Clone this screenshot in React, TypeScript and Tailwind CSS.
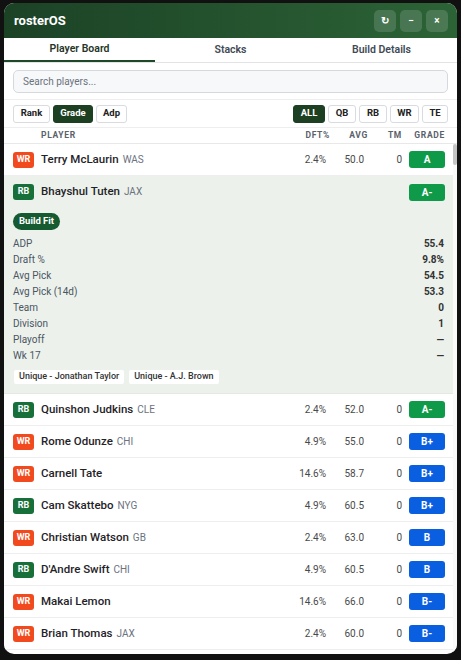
type Pos = 'WR' | 'RB';

interface Player {
  name: string;
  team?: string;
  pos: Pos;
  dft: string;
  avg: string;
  tm: string;
  grade: string;
  expanded?: boolean;
}

const players: Player[] = [
  { name: 'Terry McLaurin', team: 'WAS', pos: 'WR', dft: '2.4%', avg: '50.0', tm: '0', grade: 'A' },
  { name: 'Bhayshul Tuten', team: 'JAX', pos: 'RB', dft: '', avg: '', tm: '', grade: 'A-', expanded: true },
  { name: 'Quinshon Judkins', team: 'CLE', pos: 'RB', dft: '2.4%', avg: '52.0', tm: '0', grade: 'A-' },
  { name: 'Rome Odunze', team: 'CHI', pos: 'WR', dft: '4.9%', avg: '55.0', tm: '0', grade: 'B+' },
  { name: 'Carnell Tate', pos: 'WR', dft: '14.6%', avg: '58.7', tm: '0', grade: 'B+' },
  { name: 'Cam Skattebo', team: 'NYG', pos: 'RB', dft: '4.9%', avg: '60.5', tm: '0', grade: 'B+' },
  { name: 'Christian Watson', team: 'GB', pos: 'WR', dft: '2.4%', avg: '63.0', tm: '0', grade: 'B' },
  { name: "D'Andre Swift", team: 'CHI', pos: 'RB', dft: '4.9%', avg: '60.5', tm: '0', grade: 'B' },
  { name: 'Makai Lemon', pos: 'WR', dft: '14.6%', avg: '66.0', tm: '0', grade: 'B-' },
  { name: 'Brian Thomas', team: 'JAX', pos: 'WR', dft: '2.4%', avg: '60.0', tm: '0', grade: 'B-' },
];

const stats: [string, string][] = [
  ['ADP', '55.4'],
  ['Draft %', '9.8%'],
  ['Avg Pick', '54.5'],
  ['Avg Pick (14d)', '53.3'],
  ['Team', '0'],
  ['Division', '1'],
  ['Playoff', '—'],
  ['Wk 17', '—'],
];

function PosBadge({ pos }: { pos: Pos }) {
  return (
    <span
      className={`w-[21px] h-[16px] rounded-[3px] flex items-center justify-center text-[9px] font-bold text-white shrink-0 ${
        pos === 'WR' ? 'bg-[#f24a1f]' : 'bg-[#17703a]'
      }`}
    >
      {pos}
    </span>
  );
}

function GradeBadge({ grade }: { grade: string }) {
  const green = grade.startsWith('A');
  return (
    <span
      className={`w-[36px] h-[17px] rounded-[3px] flex items-center justify-center text-[10px] font-bold text-white ${
        green ? 'bg-[#0f9a4a]' : 'bg-[#0a5fe0]'
      }`}
    >
      {grade}
    </span>
  );
}

function NameCell({ p }: { p: Player }) {
  return (
    <div className="flex-1 flex items-center gap-[7px] min-w-0">
      <PosBadge pos={p.pos} />
      <span className="text-[11.5px] font-medium text-[#1f2328] whitespace-nowrap">
        {p.name}
        {p.team && <span className="ml-[4px] text-[10px] font-normal text-[#6b7280]">{p.team}</span>}
      </span>
    </div>
  );
}

function Row({ p }: { p: Player }) {
  return (
    <div className="h-[32px] flex items-center pl-[9px] pr-[8px] border-b border-[#eeeeee] bg-white">
      <NameCell p={p} />
      <div className="w-[50px] text-right text-[10px] text-[#4a4a4a]">{p.dft}</div>
      <div className="w-[38px] text-right text-[10px] text-[#4a4a4a]">{p.avg}</div>
      <div className="w-[38px] text-right text-[10px] text-[#4a4a4a]">{p.tm}</div>
      <div className="ml-[7px]">
        <GradeBadge grade={p.grade} />
      </div>
    </div>
  );
}

function ExpandedRow({ p }: { p: Player }) {
  return (
    <div className="bg-[#ecf1eb] border-b border-[#e3e8e2]">
      <div className="h-[32px] flex items-center pl-[9px] pr-[8px]">
        <NameCell p={p} />
        <div className="ml-[7px]">
          <GradeBadge grade={p.grade} />
        </div>
      </div>
      <div className="pl-[9px] pr-[9px] pt-[5px] pb-[9px]">
        <div className="flex">
          <span className="flex items-center h-[17px] px-[6px] rounded-full bg-[#155a31] text-white text-[9.5px] font-bold">
            Build Fit
          </span>
        </div>
        <div className="mt-[5px]">
          {stats.map(([k, v]) => (
            <div key={k} className="h-[16px] flex items-center justify-between text-[10px]">
              <span className="text-[#4b5563]">{k}</span>
              <span className="font-bold text-[#333]">{v}</span>
            </div>
          ))}
        </div>
        <div className="flex gap-[5px] mt-[7px] pl-[1px]">
          {['Unique - Jonathan Taylor', 'Unique - A.J. Brown'].map((t) => (
            <span key={t} className="h-[14px] px-[5px] flex items-center bg-white rounded-[2px] text-[9px] font-medium text-[#333]">
              {t}
            </span>
          ))}
        </div>
      </div>
    </div>
  );
}

function FilterBtn({ label, active, w }: { label: string; active?: boolean; w: string }) {
  return (
    <button
      className={`${w} h-[18px] rounded-[3px] border text-[9.5px] font-bold flex items-center justify-center ${
        active ? 'bg-[#1d3f22] border-[#1d3f22] text-white' : 'bg-white border-[#d8dbdf] text-[#222]'
      }`}
    >
      {label}
    </button>
  );
}

export default function App() {
  return (
    <div
      className="w-[461px] h-[660px] bg-[#111111] pt-[3px] pl-[4px] pr-[4px] pb-[6px]"
      style={{ fontFamily: 'Roboto, "Noto Sans", sans-serif' }}
    >
      <div className="h-full rounded-[10px] overflow-hidden bg-white flex flex-col">
        {/* title bar */}
        <div className="h-[35px] shrink-0 bg-gradient-to-r from-[#1c4226] to-[#2c6336] flex items-center pl-[10px] pr-[9px]">
          <span className="text-white font-bold text-[13px]">rosterOS</span>
          <div className="ml-auto flex gap-[4px]">
            {['↻', '−', '×'].map((g) => (
              <button
                key={g}
                className="w-[22px] h-[22px] rounded-[5px] bg-white/15 text-white text-[10px] font-bold flex items-center justify-center"
              >
                {g}
              </button>
            ))}
          </div>
        </div>

        {/* tabs */}
        <div className="h-[25px] shrink-0 flex border-b border-[#e2e4e6]">
          <div className="flex-1 flex items-center justify-center text-[10.5px] font-semibold text-[#253528] border-b-2 border-[#1f4a2a]">
            Player Board
          </div>
          <div className="flex-1 flex items-center justify-center text-[10.5px] font-semibold text-[#3f4a55]">
            Stacks
          </div>
          <div className="flex-1 flex items-center justify-center text-[10.5px] font-semibold text-[#3f4a55]">
            Build Details
          </div>
        </div>

        {/* search */}
        <div className="shrink-0 px-[9px] pt-[7px] pb-[6px] border-b border-[#eeeeee]">
          <div className="h-[23px] rounded-[5px] border border-[#d5d9de] bg-[#f7f8fa] flex items-center pl-[9px] text-[10px] text-[#6b7280]">
            Search players...
          </div>
        </div>

        {/* filters */}
        <div className="h-[28px] shrink-0 flex items-center px-[9px] border-b border-[#eeeeee]">
          <div className="flex gap-[3px]">
            <FilterBtn label="Rank" w="w-[37px]" />
            <FilterBtn label="Grade" active w="w-[40px]" />
            <FilterBtn label="Adp" w="w-[31px]" />
          </div>
          <div className="ml-auto flex gap-[3px]">
            <FilterBtn label="ALL" active w="w-[32px]" />
            <FilterBtn label="QB" w="w-[28px]" />
            <FilterBtn label="RB" w="w-[28px]" />
            <FilterBtn label="WR" w="w-[29px]" />
            <FilterBtn label="TE" w="w-[26px]" />
          </div>
        </div>

        {/* column header */}
        <div className="h-[16px] shrink-0 flex items-center pl-[37px] pr-[12px] border-b border-[#e8e8e8] text-[8.5px] font-bold tracking-[0.08em] text-[#59616b]">
          <div className="flex-1">PLAYER</div>
          <div className="w-[50px] text-right">DFT%</div>
          <div className="w-[38px] text-right">AVG</div>
          <div className="w-[34px] text-right">TM</div>
          <div className="w-[43px] text-right">GRADE</div>
        </div>

        {/* list */}
        <div className="flex-1 flex overflow-hidden">
          <div className="flex-1 overflow-hidden">
            {players.map((p) => (p.expanded ? <ExpandedRow key={p.name} p={p} /> : <Row key={p.name} p={p} />))}
          </div>
          <div className="w-[4px] bg-[#fafafa]">
            <div className="h-[21px] rounded-full bg-[#c4c4c4]" />
          </div>
        </div>
      </div>
    </div>
  );
}
